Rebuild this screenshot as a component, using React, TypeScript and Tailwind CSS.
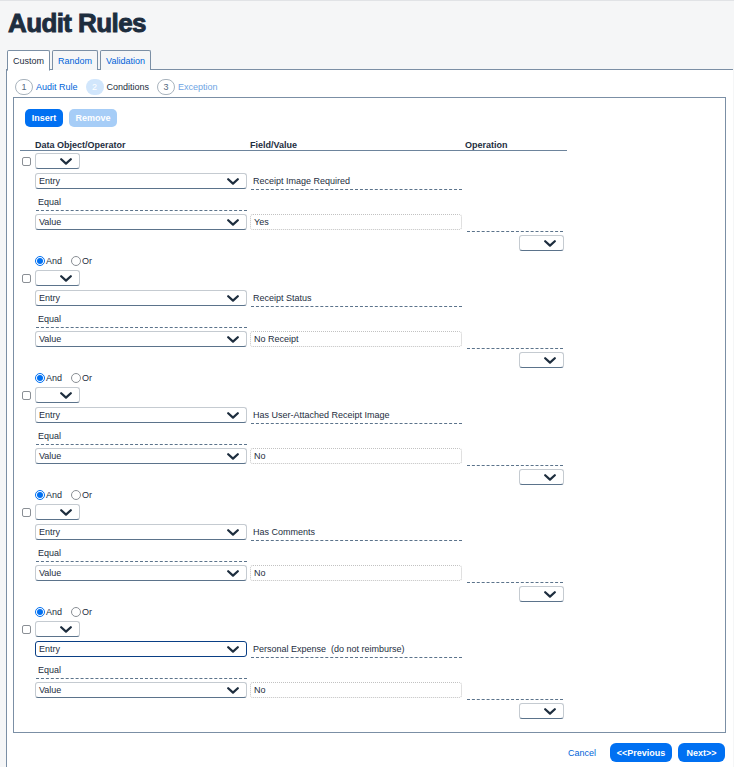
import React from "react";

const Chevron = () => (
  <svg width="12" height="7" viewBox="0 0 12 7" className="shrink-0">
    <path d="M1.2 1.2 L6 5.6 L10.8 1.2" fill="none" stroke="#1d2d3e" strokeWidth="2.2" strokeLinecap="round" strokeLinejoin="round" />
  </svg>
);

const SmallSelect = ({ w = "w-[45px]" }: { w?: string }) => (
  <div className={`${w} h-[16px] rounded-[3px] border border-[#c5cbd1] border-b-[#5b738b] bg-white flex items-center justify-end pr-[7px]`}>
    <Chevron />
  </div>
);

const BigSelect = ({ label, focused }: { label: string; focused?: boolean }) => (
  <div
    className={`w-[212px] h-[16px] rounded-[3px] border bg-white flex items-center justify-between pl-[3px] pr-[7px] ${
      focused ? "border-[#0a3f85]" : "border-[#c5cbd1] border-b-[#5b738b]"
    }`}
  >
    <span className="leading-[12px] text-[#1d2d3e]">{label}</span>
    <Chevron />
  </div>
);

const Checkbox = () => (
  <div className="w-[9px] h-[9px] rounded-[2px] border border-[#8a8f95] bg-white" />
);

const Radio = ({ checked }: { checked?: boolean }) =>
  checked ? (
    <div className="w-[10px] h-[10px] rounded-full border border-[#0070f2] bg-white flex items-center justify-center">
      <div className="w-[6px] h-[6px] rounded-full bg-[#0070f2]" />
    </div>
  ) : (
    <div className="w-[10px] h-[10px] rounded-full border border-[#8a8f95] bg-white" />
  );

type Cond = { field: string; value: string; focused?: boolean };

const conds: Cond[] = [
  { field: "Receipt Image Required", value: "Yes" },
  { field: "Receipt Status", value: "No Receipt" },
  { field: "Has User-Attached Receipt Image", value: "No" },
  { field: "Has Comments", value: "No" },
  { field: "Personal Expense\u00a0 (do not reimburse)", value: "No", focused: true },
];

const Group = ({ c, last }: { c: Cond; last: boolean }) => (
  <div className={last ? "" : "mb-[3px]"}>
    <div className="flex items-center h-[16px]">
      <div className="w-[15px] pl-[2px] flex items-center">
        <Checkbox />
      </div>
      <SmallSelect />
    </div>
    <div className="flex items-start mt-[4px]">
      <div className="w-[15px]" />
      <BigSelect label="Entry" focused={c.focused} />
      <div className="ml-[4px] w-[211px] h-[17px] border-b border-dashed border-[#5b738b] pl-[2px] flex items-center text-[#1d2d3e] leading-[12px]">
        {c.field}
      </div>
    </div>
    <div className="mt-[3px] ml-[16px] w-[211px] h-[18px] border-b border-dashed border-[#5b738b] pl-[2px] pt-[1px] flex items-center text-[#1d2d3e] leading-[12px]">
      Equal
    </div>
    <div className="flex items-start mt-[3px]">
      <div className="w-[15px]" />
      <BigSelect label="Value" />
      <div className="ml-[3px] w-[212px] h-[16px] rounded-[3px] border border-dotted border-[#c2c2c2] pl-[3px] flex items-center text-[#1d2d3e] leading-[12px]">
        {c.value}
      </div>
      <div className="ml-[5px] w-[96px] h-[18px] border-b border-dashed border-[#5b738b]" />
    </div>
    <div className="mt-[3px] ml-[499px] h-[16px] flex">
      <SmallSelect w="w-[45px]" />
    </div>
    {!last && (
      <div className="mt-[4px] ml-[15px] h-[12px] flex items-center text-[#1d2d3e] leading-[12px]">
        <Radio checked />
        <span className="ml-[1px]">And</span>
        <div className="ml-[9px]">
          <Radio />
        </div>
        <span className="ml-[1px]">Or</span>
      </div>
    )}
  </div>
);

export default function App() {
  return (
    <div className="min-h-[767px] bg-[#f5f6f7] border-t border-[#e1e3e6] font-['Liberation_Sans',Arial,sans-serif] text-[9px] text-[#1d2d3e]">
      <div className="pt-[9px] pl-[8px]">
        <h1 className="text-[26px] leading-[26px] font-bold tracking-[-0.6px] text-[#1d2d3e] [-webkit-text-stroke:0.9px_#1d2d3e]">Audit Rules</h1>
      </div>
      <div className="mt-[14px] ml-[6px] mr-[1px]">
        <div className="flex gap-[2px] pl-[1px] border-b border-[#7b8fa5] h-[20px]">
          <div className="h-[21px] px-[5px] flex items-center border border-[#7b8fa5] border-b-white bg-white rounded-t-[2px] text-[#1d2d3e] leading-[12px]">
            Custom
          </div>
          <div className="h-[20px] px-[5px] flex items-center border border-b-0 border-[#7b8fa5] bg-[#f5f6f7] rounded-t-[2px] text-[#0064d9] leading-[12px]">
            Random
          </div>
          <div className="h-[20px] px-[5px] flex items-center border border-b-0 border-[#7b8fa5] bg-[#f5f6f7] rounded-t-[2px] text-[#0064d9] leading-[12px]">
            Validation
          </div>
        </div>
        <div className="bg-white border-l border-[#7b8fa5] pl-[6px] pr-[7px] pt-[8px] min-h-[697px]">
          <div className="flex items-center h-[17px] pl-[2px] leading-[12px]">
            <div className="w-[18px] h-[16px] rounded-full border border-[#a9b4be] flex items-center justify-center text-[#556b82]">1</div>
            <span className="ml-[3px] text-[#0064d9]">Audit Rule</span>
            <div className="ml-[8px] w-[18px] h-[16px] rounded-full bg-[#d1e6fc] flex items-center justify-center text-white">2</div>
            <span className="ml-[3px] text-[#1d2d3e]">Conditions</span>
            <div className="ml-[8px] w-[18px] h-[16px] rounded-full border border-[#a9b4be] flex items-center justify-center text-[#556b82]">3</div>
            <span className="ml-[3px] text-[#6ea4e4]">Exception</span>
          </div>
          <div className="mt-[2px] border border-[#7b8fa5] pt-[11px] pl-[6px] pb-[13px]">
            <div className="flex gap-[6px] ml-[5px]">
              <div className="w-[38px] h-[18px] rounded-[5px] bg-[#0070f2] text-white font-bold flex items-center justify-center leading-[12px]">Insert</div>
              <div className="w-[48px] h-[18px] rounded-[5px] bg-[#a6cdf7] text-white font-bold flex items-center justify-center leading-[12px]">Remove</div>
            </div>
            <div className="mt-[3px] w-[547px] h-[21px] border-b border-[#6d849c] flex items-end font-bold leading-[10px] text-[#1d2d3e]">
              <div className="w-[15px]" />
              <div className="w-[215px]">Data Object/Operator</div>
              <div className="w-[215px]">Field/Value</div>
              <div>Operation</div>
            </div>
            <div className="mt-[2px]">
              {conds.map((c, i) => (
                <Group key={i} c={c} last={i === conds.length - 1} />
              ))}
            </div>
          </div>
          <div className="mt-[10px] flex justify-end items-center pr-[1px] leading-[12px]">
            <span className="text-[#0064d9]">Cancel</span>
            <div className="ml-[14px] w-[62px] h-[19px] rounded-[6px] bg-[#0070f2] text-white font-bold flex items-center justify-center">&lt;&lt;Previous</div>
            <div className="ml-[6px] w-[47px] h-[19px] rounded-[6px] bg-[#0070f2] text-white font-bold flex items-center justify-center">Next&gt;&gt;</div>
          </div>
        </div>
      </div>
    </div>
  );
}
